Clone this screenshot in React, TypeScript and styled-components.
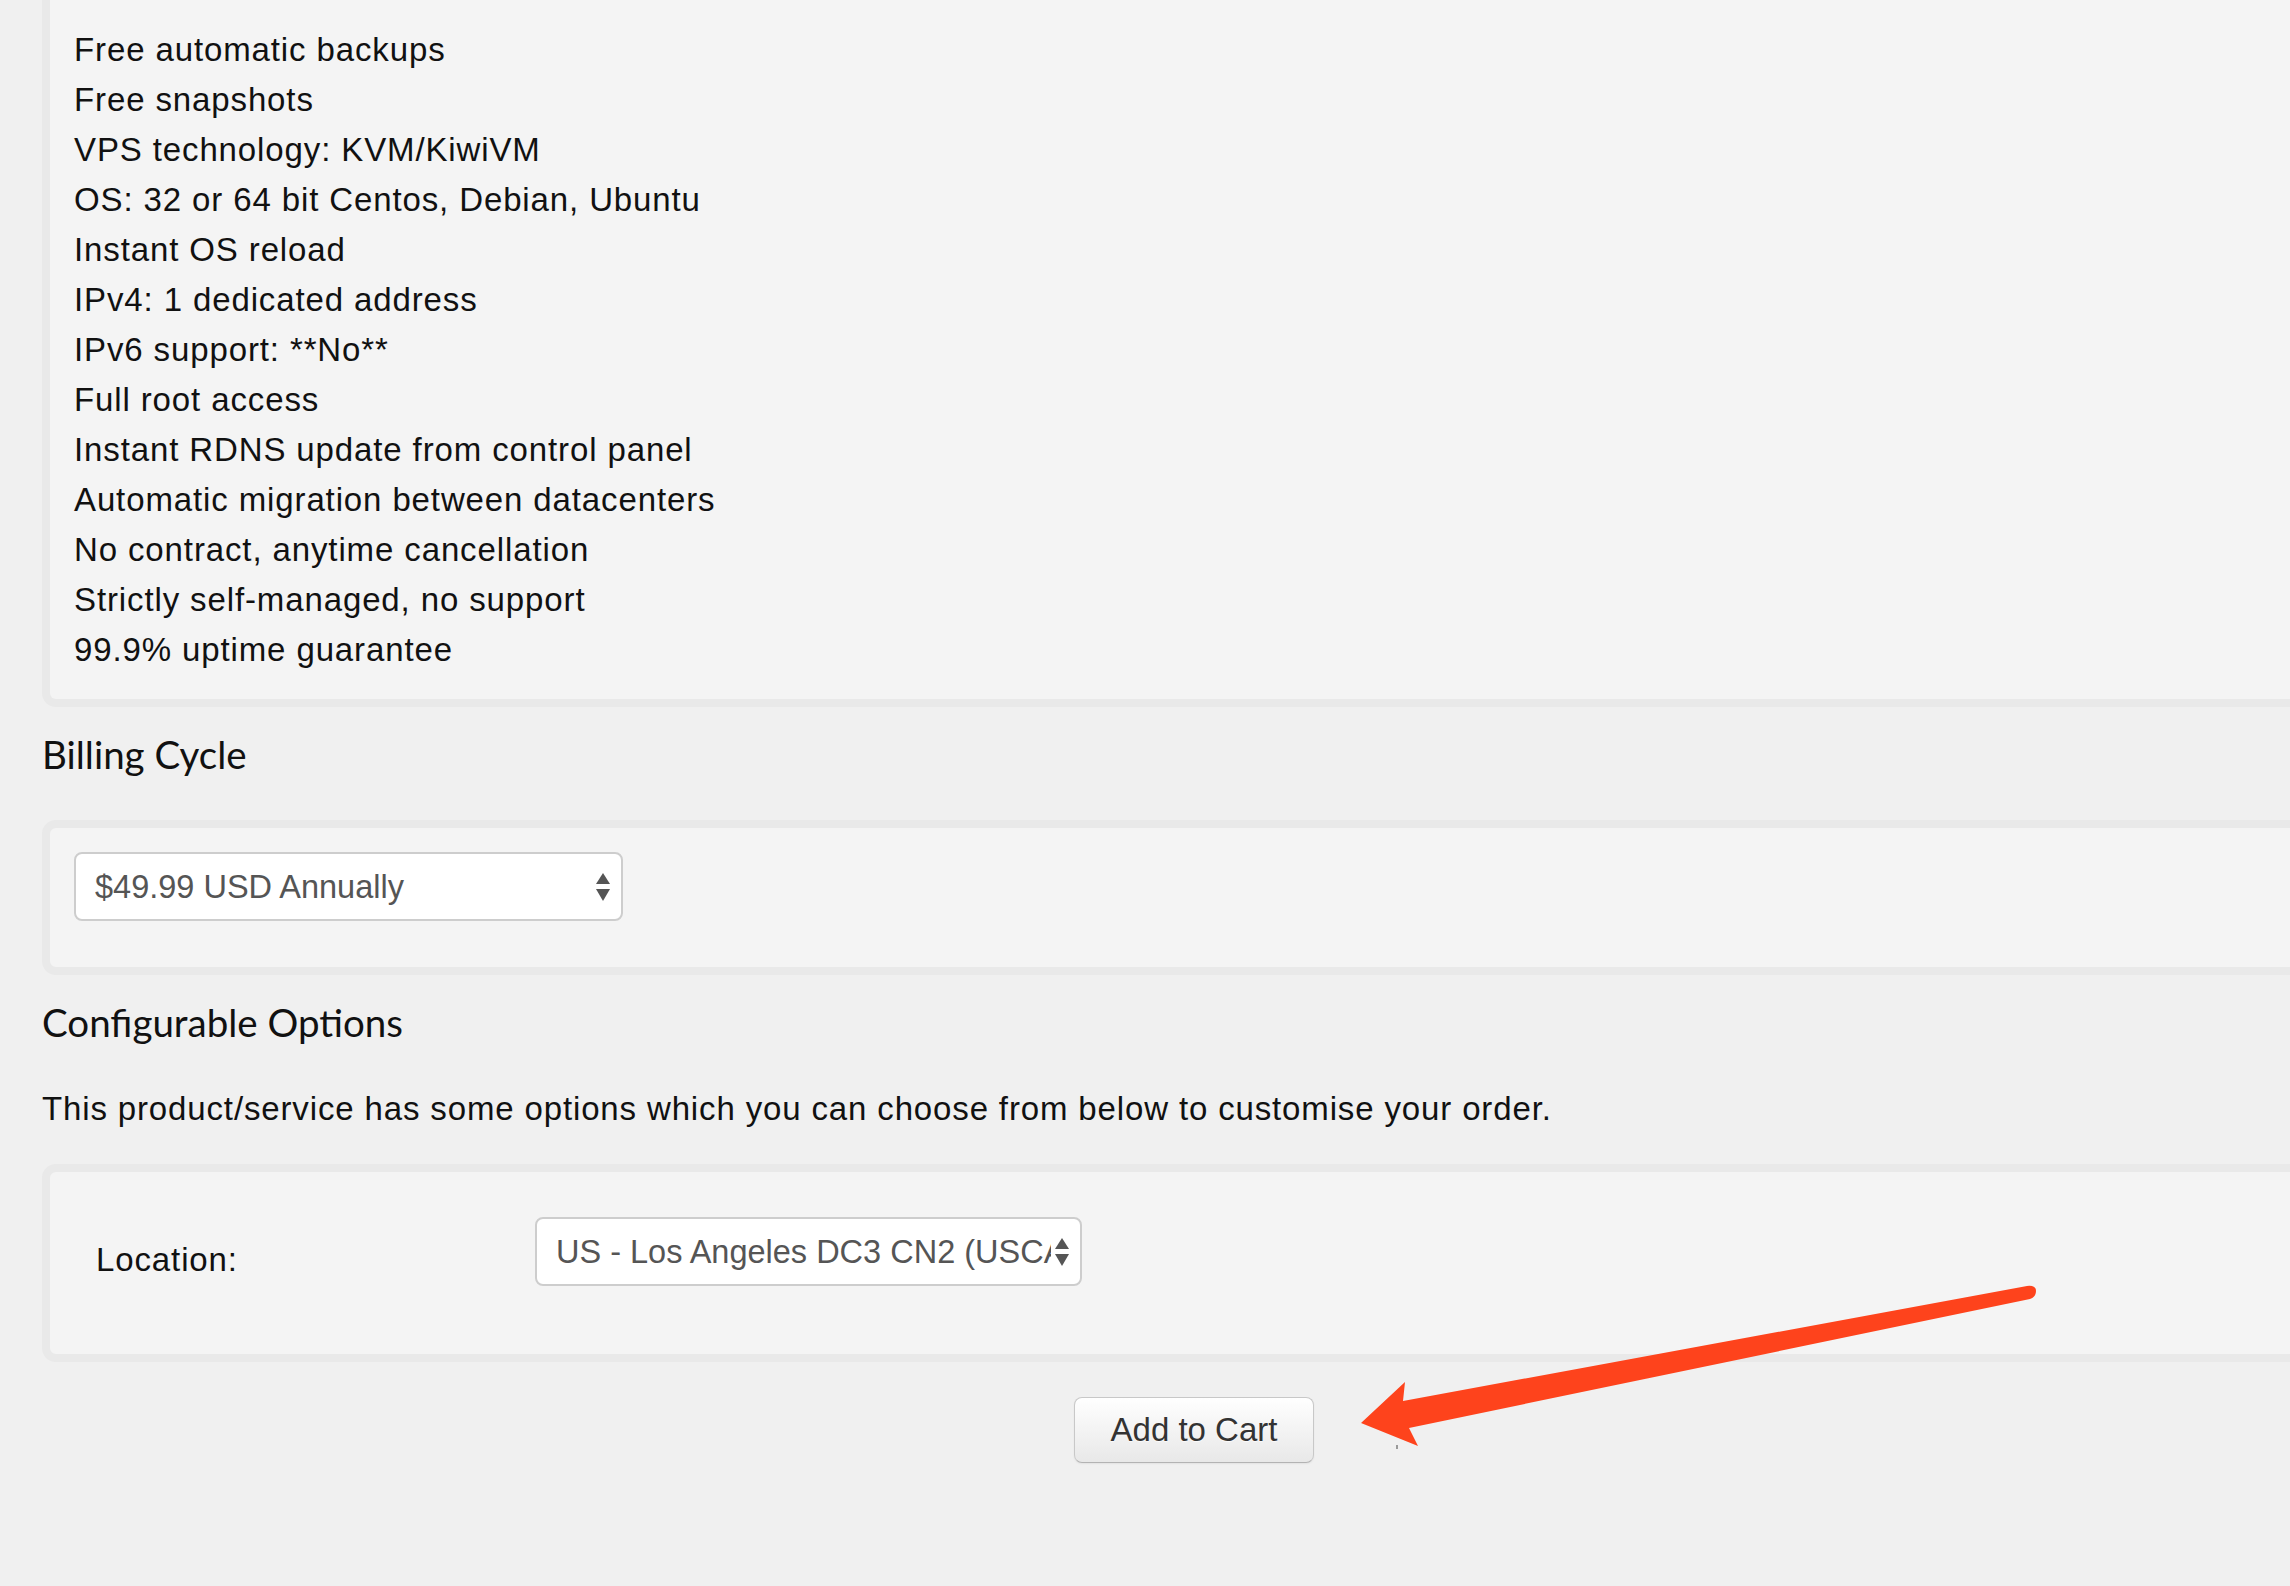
import React from "react";
import styled, { createGlobalStyle, css } from "styled-components";

const GlobalStyle = createGlobalStyle`
  html, body {
    margin: 0;
    padding: 0;
    background: #f0f0f0;
    overflow: hidden;
  }
  body {
    font-family: "Liberation Sans", Arial, Helvetica, sans-serif;
    color: #111;
  }
`;

const Page = styled.div`
  position: relative;
  width: 2290px;
  height: 1586px;
  overflow: hidden;
  background: #f0f0f0;
`;

const Column = styled.main`
  display: flex;
  flex-direction: column;
  width: 2304px;
  margin-left: 42px;
`;

const Well = styled.section<{ $cropTop?: boolean; $gap?: number }>`
  box-sizing: border-box;
  background: #f4f4f4;
  border: 8px solid #e9e9e9;
  border-radius: 14px;
  margin-top: ${(p) => p.$gap ?? 0}px;
  ${(p) =>
    p.$cropTop &&
    css`
      border-top-width: 0;
      border-top-left-radius: 0;
      border-top-right-radius: 0;
    `}
`;

const FeatureList = styled.ul`
  list-style: none;
  margin: 0;
  padding: 25px 24px 24px;
  font-size: 33px;
  line-height: 50px;
  letter-spacing: 0.88px;
  color: #111;
`;

const FeatureItem = styled.li`
  margin: 0;
  white-space: nowrap;
`;

const SectionTitle = styled.h2`
  margin: 24px 0 0;
  font-family: Lato, "Open Sans", sans-serif;
  font-weight: 400;
  font-size: 38.5px;
  line-height: 46px;
  color: #111;
`;

const Intro = styled.p`
  margin: 39px 0 30px;
  font-size: 33px;
  line-height: 50px;
  letter-spacing: 0.86px;
  color: #111;
  white-space: nowrap;
`;

const BillingBody = styled.div`
  padding: 24px 24px 46px;
`;

const OptionsGrid = styled.div`
  display: grid;
  grid-template-columns: 439px 547px;
  align-items: start;
  padding: 45px 24px 68px 46px;
`;

const OptionLabel = styled.label`
  padding-top: 18px;
  font-size: 33px;
  line-height: 50px;
  letter-spacing: 0.88px;
  color: #111;
`;

const SelectBox = styled.div<{ $width: number }>`
  display: flex;
  align-items: center;
  gap: 4px;
  box-sizing: border-box;
  width: ${(p) => p.$width}px;
  height: 69px;
  padding: 0 11px 0 19px;
  background: #fff;
  border: 2px solid #cdcdcd;
  border-radius: 8px;
  color: #555;
  font-size: 32.5px;
  cursor: default;
`;

const SelectValue = styled.span`
  flex: 1;
  min-width: 0;
  overflow: hidden;
  white-space: nowrap;
  line-height: 40px;
`;

const Arrows = styled.svg`
  flex: none;
  display: block;
`;

const ButtonRow = styled.div`
  display: flex;
  justify-content: center;
  margin-top: 35px;
`;

const CartButton = styled.button`
  font-family: "Liberation Sans", Arial, sans-serif;
  font-size: 33px;
  line-height: 40px;
  padding: 12px 36px;
  color: #333;
  background: linear-gradient(#ffffff, #e8e8e8);
  border: 1px solid #c8c8c8;
  border-bottom-color: #b3b3b3;
  border-radius: 8px;
  box-shadow: inset 0 1px 0 rgba(255, 255, 255, 0.2), 0 1px 2px rgba(0, 0, 0, 0.06);
  text-shadow: 0 1px 1px rgba(255, 255, 255, 0.75);
  cursor: pointer;
`;

const Annotation = styled.svg`
  position: absolute;
  left: 0;
  top: 0;
  width: 2290px;
  height: 1586px;
  pointer-events: none;
`;

const features = [
  "Free automatic backups",
  "Free snapshots",
  "VPS technology: KVM/KiwiVM",
  "OS: 32 or 64 bit Centos, Debian, Ubuntu",
  "Instant OS reload",
  "IPv4: 1 dedicated address",
  "IPv6 support: **No**",
  "Full root access",
  "Instant RDNS update from control panel",
  "Automatic migration between datacenters",
  "No contract, anytime cancellation",
  "Strictly self-managed, no support",
  "99.9% uptime guarantee",
];

const SelectArrows = () => (
  <Arrows width="14" height="28" viewBox="0 0 14 28">
    <polygon points="0,11 7,0 14,11" fill="#555" />
    <polygon points="0,16 14,16 7,28" fill="#555" />
  </Arrows>
);

const Select = ({ value, width }: { value: string; width: number }) => (
  <SelectBox $width={width}>
    <SelectValue>{value}</SelectValue>
    <SelectArrows />
  </SelectBox>
);

export default function App() {
  return (
    <Page>
      <GlobalStyle />
      <Column>
        <Well $cropTop>
          <FeatureList>
            {features.map((f) => (
              <FeatureItem key={f}>{f}</FeatureItem>
            ))}
          </FeatureList>
        </Well>

        <SectionTitle>Billing Cycle</SectionTitle>
        <Well $gap={43}>
          <BillingBody>
            <Select value="$49.99 USD Annually" width={549} />
          </BillingBody>
        </Well>

        <SectionTitle>Configurable Options</SectionTitle>
        <Intro>
          This product/service has some options which you can choose from below to customise your order.
        </Intro>
        <Well>
          <OptionsGrid>
            <OptionLabel>Location:</OptionLabel>
            <Select value="US - Los Angeles DC3 CN2 (USCA_9)" width={547} />
          </OptionsGrid>
        </Well>

        <ButtonRow>
          <CartButton type="button">Add to Cart</CartButton>
        </ButtonRow>
      </Column>

      <Annotation viewBox="0 0 2290 1586">
        <path
          d="M1361 1423 L1405 1382 L1403 1401 L2027 1286 Q2036 1285 2036 1291 Q2036 1297 2030 1299 L1409 1428 L1418 1446 Z"
          fill="#fe431c"
        />
        <rect x="1396" y="1445" width="2" height="4" fill="#9a9a9a" />
      </Annotation>
    </Page>
  );
}
